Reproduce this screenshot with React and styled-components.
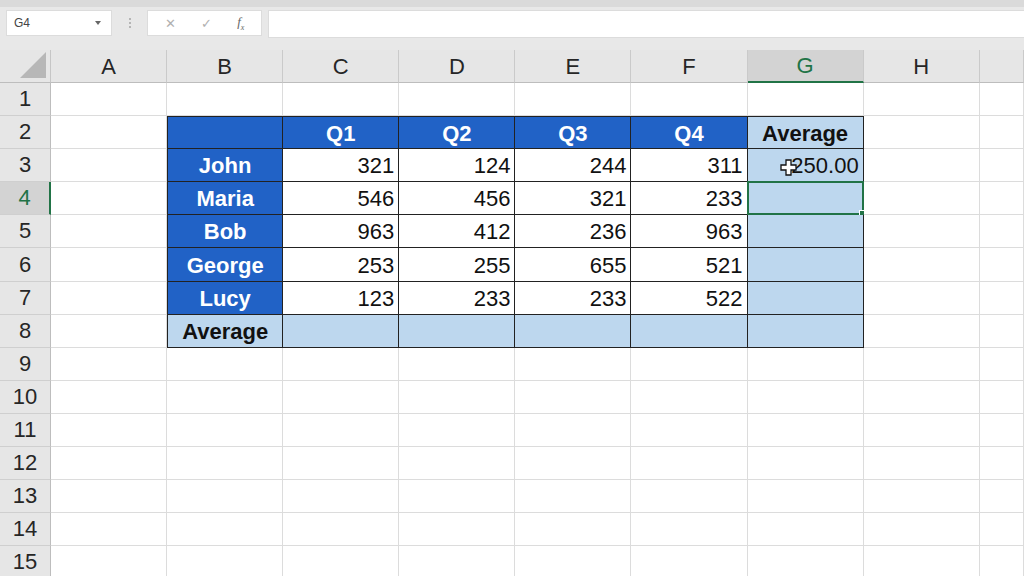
import React from 'react'
import styled, { createGlobalStyle, css } from 'styled-components'

const GlobalStyle = createGlobalStyle`
  html, body {
    margin: 0;
    padding: 0;
    background: #e6e6e6;
  }
  body {
    width: 1024px;
    height: 576px;
    overflow: hidden;
    font-family: "Liberation Sans", Arial, sans-serif;
  }
`;

const Window = styled.div`
  width: 1024px;
  height: 576px;
  display: flex;
  flex-direction: column;
  background: #e6e6e6;
  overflow: hidden;
`;

const FormulaBar = styled.div`
  height: 50px;
  flex: 0 0 50px;
  box-sizing: border-box;
  display: flex;
  align-items: flex-start;
  padding: 3px 0 0 6px;
  border-top: 7px solid #dadada;
  background: #e8e8e8;
`;

const NameBox = styled.div`
  width: 106px;
  height: 26px;
  box-sizing: border-box;
  background: #fff;
  border: 1px solid #dcdcdc;
  display: flex;
  align-items: center;
  justify-content: space-between;
  padding: 0 10px 0 7px;
  font-size: 12px;
  color: #444;
`;

const Caret = styled.span`
  width: 0;
  height: 0;
  border-left: 3px solid transparent;
  border-right: 3px solid transparent;
  border-top: 4px solid #666;
`;

const Dots = styled.div`
  width: 35px;
  height: 26px;
  display: flex;
  flex-direction: column;
  align-items: center;
  justify-content: center;
  gap: 2px;
  span {
    width: 2px;
    height: 2px;
    background: #b5b5b5;
  }
`;

const ButtonGroup = styled.div`
  width: 115px;
  height: 26px;
  box-sizing: border-box;
  background: #fff;
  border: 1px solid #dcdcdc;
  display: flex;
  align-items: center;
  justify-content: space-around;
  padding: 0 4px;
  color: #b0b0b0;
  font-size: 13px;
`;

const Fx = styled.span`
  font-family: "Liberation Serif", serif;
  font-style: italic;
  font-size: 13px;
  color: #666;
  sub {
    font-size: 8px;
  }
`;

const FormulaInput = styled.div`
  flex: 1;
  height: 26px;
  margin-left: 6px;
  background: #fff;
  border: 1px solid #dcdcdc;
  border-right: none;
`;

const Sheet = styled.div`
  display: grid;
  grid-template-columns: 51px repeat(8, 116.1px) 1fr;
  grid-template-rows: 33px;
  grid-auto-rows: 33.1px;
  background: #fff;
  flex: 1;
`;

const Corner = styled.div`
  background: #e6e6e6;
  border-right: 1px solid #c6c6c6;
  border-bottom: 1px solid #bdbdbd;
  position: relative;
  &::after {
    content: '';
    position: absolute;
    right: 4px;
    bottom: 4px;
    width: 0;
    height: 0;
    border-left: 26px solid transparent;
    border-bottom: 26px solid #b7b7b7;
  }
`;

const ColHeader = styled.div`
  background: ${p => (p.$active ? '#d3d3d3' : '#e6e6e6')};
  color: ${p => (p.$active ? '#217346' : '#262626')};
  border-right: 1px solid #cacaca;
  border-bottom: ${p => (p.$active ? '2px solid #217346' : '1px solid #bdbdbd')};
  box-sizing: border-box;
  display: flex;
  align-items: center;
  justify-content: center;
  font-size: 22px;
  padding-top: 1px;
`;

const RowHeader = styled.div`
  background: ${p => (p.$active ? '#d3d3d3' : '#e6e6e6')};
  color: ${p => (p.$active ? '#217346' : '#262626')};
  border-right: ${p => (p.$active ? '2px solid #217346' : '1px solid #bdbdbd')};
  border-bottom: 1px solid #cfcfcf;
  box-sizing: border-box;
  display: flex;
  align-items: center;
  justify-content: center;
  font-size: 22px;
`;

const toneStyles = {
  blank: css`
    background: #fff;
    box-shadow: inset -1px -1px 0 #dcdcdc;
  `,
  blue: css`
    background: #2162c6;
    color: #fff;
    font-weight: 700;
    justify-content: center;
  `,
  light: css`
    background: #bdd7ee;
    color: #111;
    font-weight: 700;
    justify-content: center;
  `,
  number: css`
    background: #fff;
    color: #111;
    justify-content: flex-end;
  `,
  lightNumber: css`
    background: #bdd7ee;
    color: #111;
    justify-content: flex-end;
  `,
};

const Cell = styled.div`
  box-sizing: border-box;
  display: flex;
  align-items: center;
  padding: 2px 4px 0;
  font-size: 22px;
  position: relative;
  ${p => toneStyles[p.$tone || 'blank']}
  ${p =>
    p.$tone &&
    p.$tone !== 'blank' &&
    css`
      border-right: 1px solid #222;
      border-bottom: 1px solid #222;
      ${p.$left && 'border-left: 1px solid #222;'}
      ${p.$top && 'border-top: 1px solid #222;'}
    `}
  ${p =>
    p.$selected &&
    css`
      border: 2px solid #217346;
      margin: -1px 0 0 -1px;
    `}
`;

const FillHandle = styled.span`
  position: absolute;
  right: -4px;
  bottom: -4px;
  width: 5px;
  height: 5px;
  background: #217346;
  border: 1px solid #fff;
`;

const Cursor = styled.svg`
  position: absolute;
  left: 32px;
  top: 10px;
  width: 17px;
  height: 17px;
`;

const columns = ['A', 'B', 'C', 'D', 'E', 'F', 'G', 'H', '']

const data = [
  ['John', 321, 124, 244, 311],
  ['Maria', 546, 456, 321, 233],
  ['Bob', 963, 412, 236, 963],
  ['George', 253, 255, 655, 521],
  ['Lucy', 123, 233, 233, 522],
]

// build the cells of one sheet row (columns A..I)
const rowCells = r => {
  const cells = []
  for (let c = 0; c < 9; c++) {
    let props = {}
    let content = null
    const inTable = r >= 2 && r <= 8 && c >= 1 && c <= 6
    if (inTable) {
      if (r === 2) {
        if (c <= 5) {
          props = { $tone: 'blue' }
          content = c === 1 ? '' : `Q${c - 1}`
        } else {
          props = { $tone: 'light' }
          content = 'Average'
        }
      } else if (r === 8) {
        props = { $tone: 'light' }
        content = c === 1 ? 'Average' : ''
      } else {
        const row = data[r - 3]
        if (c === 1) {
          props = { $tone: 'blue' }
          content = row[0]
        } else if (c <= 5) {
          props = { $tone: 'number' }
          content = row[c - 1]
        } else {
          props = { $tone: 'lightNumber' }
          content = r === 3 ? '250.00' : ''
        }
      }
      props.$left = c === 1
      props.$top = r === 2
    }
    const selected = r === 4 && c === 6
    cells.push(
      <Cell key={`${r}-${c}`} {...props} $selected={selected}>
        {content}
        {selected && <FillHandle />}
        {r === 3 && c === 6 && (
          <Cursor viewBox="0 0 17 17">
            <path
              d="M6 1h5v5h5v5h-5v5H6v-5H1V6h5z"
              fill="#fff"
              stroke="#111"
              strokeWidth="1.3"
            />
          </Cursor>
        )}
      </Cell>
    )
  }
  return cells
}

const App = () => {
  const rows = Array.from({ length: 15 }, (_, i) => i + 1)

  return (
    <Window>
      <GlobalStyle />
      <FormulaBar>
        <NameBox>
          G4
          <Caret />
        </NameBox>
        <Dots>
          <span />
          <span />
          <span />
        </Dots>
        <ButtonGroup>
          <span>✕</span>
          <span>✓</span>
          <Fx>
            f<sub>x</sub>
          </Fx>
        </ButtonGroup>
        <FormulaInput />
      </FormulaBar>
      <Sheet>
        <Corner />
        {columns.map((col, i) => (
          <ColHeader key={i} $active={col === 'G'}>
            {col}
          </ColHeader>
        ))}
        {rows.map(r => (
          <React.Fragment key={r}>
            <RowHeader $active={r === 4}>{r}</RowHeader>
            {rowCells(r)}
          </React.Fragment>
        ))}
      </Sheet>
    </Window>
  )
}

export default App
